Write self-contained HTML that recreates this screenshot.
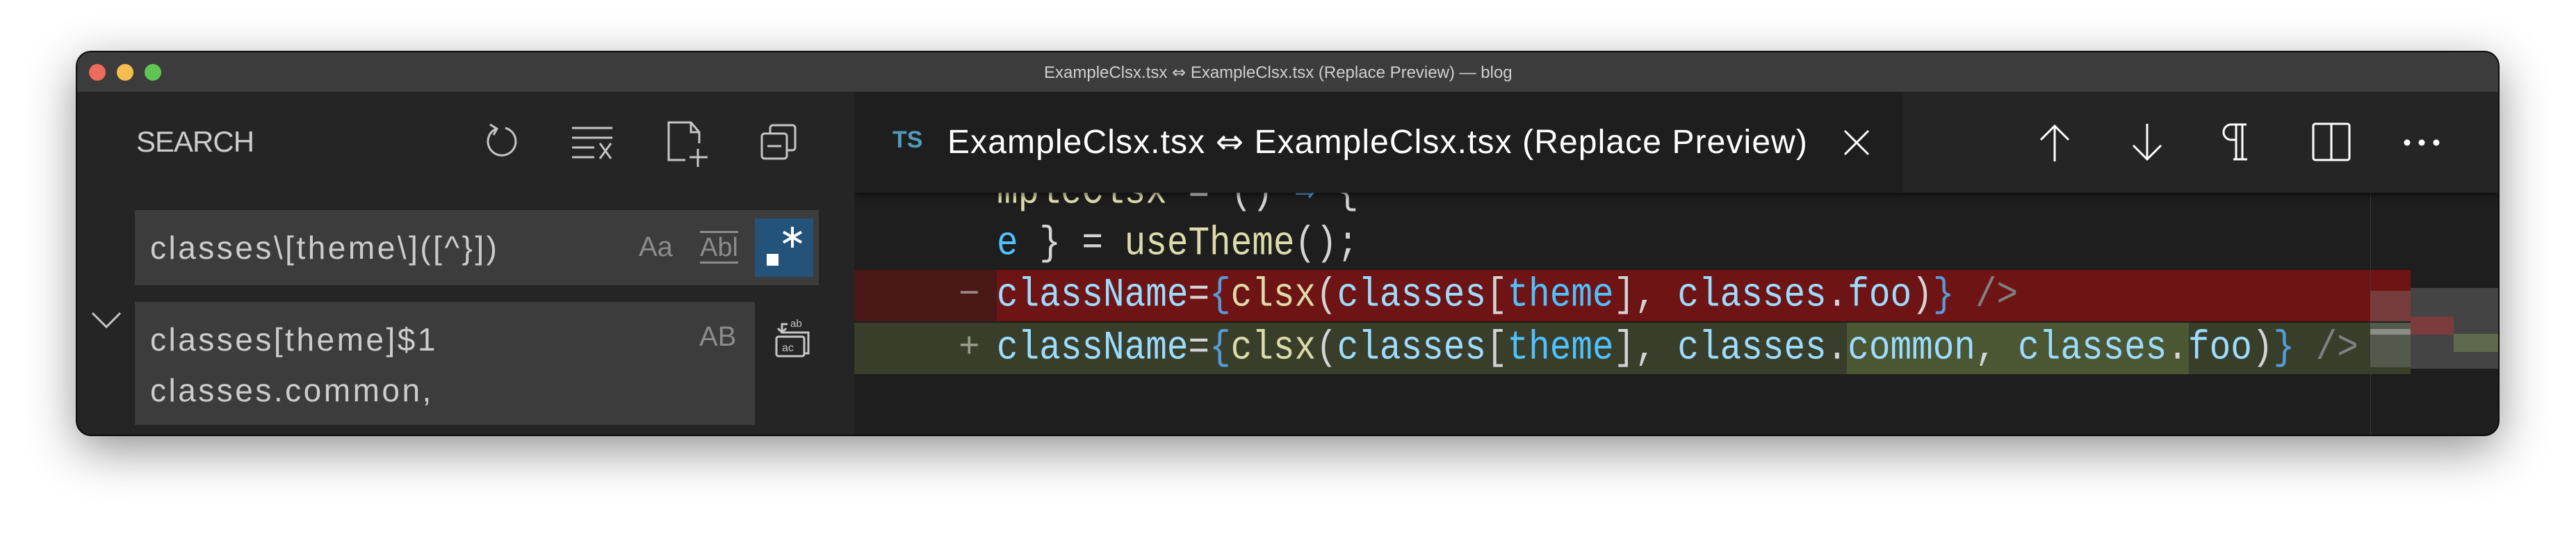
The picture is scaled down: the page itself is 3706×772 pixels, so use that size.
<!DOCTYPE html>
<html><head><meta charset="utf-8"><style>
*{margin:0;padding:0;box-sizing:border-box}
body{width:3706px;height:772px;background:#fff;position:relative;overflow:hidden;font-family:"Liberation Sans",sans-serif}
.win{position:absolute;left:111px;top:75px;width:3483px;height:550px;border-radius:20px;background:#1e1e1e;overflow:hidden;box-shadow:0 20px 70px rgba(0,0,0,.45),0 0 0 2px #111}
.abs{position:absolute}
.title{left:0;top:0;width:100%;height:57px;background:#3c3c3c}
.dot{position:absolute;top:17px;width:24px;height:24px;border-radius:50%}
.side{left:0;top:57px;width:1118px;height:493px;background:#252526}
.mono{font-family:"Liberation Mono","DejaVu Sans Mono",monospace;font-size:51px;white-space:pre}
.ln{position:absolute;left:0;height:74px;width:2239px}
.ln span.t{position:absolute;left:205px;top:2px;line-height:74px;display:inline-block;transform:scaleY(1.15);transform-origin:50% 60%}
.c1{color:#9cdcfe}.c2{color:#dcdcaa}.c3{color:#4fc1ff}.cw{color:#d4d4d4}.cb{color:#569cd6}.cg{color:#808080}
svg{position:absolute}
.in{font-size:46px;letter-spacing:3.5px;color:#cccccc;line-height:73px;white-space:nowrap}
.ar{font-family:"DejaVu Sans",sans-serif}
</style></head><body>
<div class="win">
 <div class="abs title">
  <div class="dot" style="left:17px;background:#ed6a5e"></div>
  <div class="dot" style="left:57px;background:#f5bf4f"></div>
  <div class="dot" style="left:97px;background:#61c554"></div>
  <div class="abs" style="left:1391px;top:15px;font-size:24px;color:#cfcfcf;white-space:nowrap">ExampleClsx.tsx <span class="ar">⇔</span> ExampleClsx.tsx (Replace Preview) — blog</div>
 </div>
 <div class="abs side">
  <div class="abs" style="left:85px;top:48px;font-size:42px;color:#cccccc;letter-spacing:-1px">SEARCH</div>
  <svg style="left:583px;top:44px" width="56" height="56" viewBox="0 0 56 56" fill="none" stroke="#c5c5c5" stroke-width="3"><path d="M20 9 A20 20 0 1 0 33 8"/><path d="M11 3 L21 9 L16 18"/></svg>
  <svg style="left:712px;top:48px" width="64" height="50" viewBox="0 0 64 50" fill="none" stroke="#c5c5c5" stroke-width="3"><path d="M0 4H58M0 18H58M0 32H32M0 46H32M40 26L56 48M56 26L40 48"/></svg>
  <svg style="left:849px;top:42px" width="62" height="66" viewBox="0 0 62 66" fill="none" stroke="#c5c5c5" stroke-width="3"><path d="M26 56H2V2H34L46 16V32M34 2V16H46M44 40V66M32 52H58"/></svg>
  <svg style="left:983px;top:46px" width="52" height="52" viewBox="0 0 52 52" fill="none" stroke="#c5c5c5" stroke-width="3"><rect x="2" y="14" width="36" height="36" rx="4"/><path d="M14 14V6a4 4 0 0 1 4-4h28a4 4 0 0 1 4 4v28a4 4 0 0 1-4 4h-8M10 32H30"/></svg>
  <div class="abs" style="left:83px;top:170px;width:984px;height:108px;background:#3c3c3c"></div>
  <div class="abs in" style="left:105px;top:188px">classes\[theme\]([^}])</div>
  <div class="abs" style="left:808px;top:193px;font-size:40px;line-height:60px;color:#8b8b8b">Aa</div>
  <div class="abs" style="left:896px;top:200px;font-size:38px;color:#8b8b8b;border-top:3px solid #8b8b8b;border-bottom:3px solid #8b8b8b;height:47px;line-height:42px">Abl</div>
  <div class="abs" style="left:975px;top:182px;width:84px;height:84px;background:#235379"></div>
  <div class="abs" style="left:992px;top:233px;width:17px;height:17px;background:#fff"></div>
  <svg style="left:1012px;top:192px" width="34" height="34" viewBox="0 0 34 34" stroke="#fff" stroke-width="4"><path d="M17 2V32M4 9.5L30 24.5M30 9.5L4 24.5"/></svg>
  <svg style="left:20px;top:316px" width="44" height="24" viewBox="0 0 44 24" fill="none" stroke="#c5c5c5" stroke-width="3"><path d="M2 2L22 22L42 2"/></svg>
  <div class="abs" style="left:83px;top:302px;width:892px;height:177px;background:#3c3c3c"></div>
  <div class="abs in" style="left:105px;top:320px">classes[theme]$1<br>classes.common,</div>
  <div class="abs" style="left:895px;top:322px;font-size:40px;line-height:60px;color:#8b8b8b">AB</div>
  <svg style="left:1002px;top:324px" width="56" height="60" viewBox="0 0 56 60" fill="none" stroke="#c5c5c5" stroke-width="3"><path d="M20 10H12V22M6 16L12 22L18 16"/><rect x="4" y="28" width="40" height="28" rx="3"/><path d="M12 22H50V52H44"/><text x="24" y="14" font-size="15" fill="#c5c5c5" stroke="none" font-family="Liberation Sans">ab</text><text x="12" y="49" font-size="16" fill="#c5c5c5" stroke="none" font-family="Liberation Sans">ac</text></svg>
 </div>
 <div class="abs" style="left:1118px;top:57px;width:2365px;height:493px;background:#1e1e1e;overflow:hidden">
  <div class="mono">
   <div class="ln" style="top:108px"><span class="t"><span class="c2">mpleClsx</span><span class="cw"> = () </span><span class="cb">⇒</span><span class="cw"> {</span></span></div>
   <div class="ln" style="top:182px"><span class="t"><span class="c3">e</span><span class="cw"> } = </span><span class="c2">useTheme</span><span class="cw">();</span></span></div>
   <div class="ln" style="top:256px;background:#6f1414"><div class="abs" style="left:0;top:0;width:205px;height:74px;background:#4b1818"></div><span class="abs" style="left:150px;line-height:74px;color:#9a8a8a">−</span><span class="t"><span class="c1">className</span><span class="cw">=</span><span class="cb">{</span><span class="c2">clsx</span><span class="cw">(</span><span class="c1">classes</span><span class="cw">[</span><span class="c3">theme</span><span class="cw">], </span><span class="c1">classes</span><span class="cw">.</span><span class="c1">foo</span><span class="cw">)</span><span class="cb">}</span><span class="cg"> /&gt;</span></span></div>
   <div class="ln" style="top:332px;background:#393e2b"><div class="abs" style="left:1428px;top:0;width:492px;height:74px;background:#4b5633"></div><span class="abs" style="left:150px;line-height:74px;color:#9a9a8a">+</span><span class="t"><span class="c1">className</span><span class="cw">=</span><span class="cb">{</span><span class="c2">clsx</span><span class="cw">(</span><span class="c1">classes</span><span class="cw">[</span><span class="c3">theme</span><span class="cw">], </span><span class="c1">classes</span><span class="cw">.</span><span class="c1">common</span><span class="cw">, </span><span class="c1">classes</span><span class="cw">.</span><span class="c1">foo</span><span class="cw">)</span><span class="cb">}</span><span class="cg"> /&gt;</span></span></div>
  </div>
  <div class="abs" style="left:2181px;top:145px;width:1px;height:348px;background:#3a3a3a"></div>
  <div class="abs" style="left:2181px;top:286px;width:58px;height:44px;background:#773c3c"></div>
  <div class="abs" style="left:2181px;top:332px;width:58px;height:64px;background:#545a4b"></div>
  <div class="abs" style="left:2181px;top:341px;width:58px;height:8px;background:#8a8e86"></div>
  <div class="abs" style="left:2239px;top:282px;width:126px;height:116px;background:#444"></div>
  <div class="abs" style="left:2239px;top:323px;width:62px;height:26px;background:#7a3c3c"></div>
  <div class="abs" style="left:2301px;top:348px;width:64px;height:26px;background:#5f6a4c"></div>
  <div class="abs" style="left:0;top:0;width:2365px;height:145px;background:#252526;box-shadow:0 4px 8px rgba(0,0,0,.5)"></div>
  <div class="abs" style="left:0;top:0;width:1508px;height:145px;background:#1e1e1e"></div>
  <div class="abs" style="left:55px;top:50px;font-size:34px;font-weight:bold;color:#519aba">TS</div>
  <div class="abs" style="left:134px;top:44px;font-size:48px;color:#ffffff;white-space:nowrap;letter-spacing:1.1px">ExampleClsx.tsx <span class="ar">⇔</span> ExampleClsx.tsx (Replace Preview)</div>
  <svg style="left:1423px;top:54px" width="38" height="38" viewBox="0 0 38 38" stroke="#fff" stroke-width="3"><path d="M2 2L36 36M36 2L2 36"/></svg>
  <svg style="left:1704px;top:46px" width="46" height="54" viewBox="0 0 46 54" fill="none" stroke="#fff" stroke-width="3"><path d="M23 54V3M3 23L23 3L43 23"/></svg>
  <svg style="left:1837px;top:46px" width="46" height="54" viewBox="0 0 46 54" fill="none" stroke="#fff" stroke-width="3"><path d="M23 0V51M3 31L23 51L43 31"/></svg>
  <svg style="left:1967px;top:44px" width="40" height="56" viewBox="0 0 40 56" fill="none" stroke="#fff" stroke-width="3"><path d="M36 3H14a11 11 0 0 0 0 22h7M21 3V53M30 3V53M17 53H37"/></svg>
  <svg style="left:2097px;top:44px" width="56" height="56" viewBox="0 0 56 56" fill="none" stroke="#fff" stroke-width="3"><rect x="2" y="2" width="52" height="52" rx="3"/><path d="M28 2V54"/></svg>
  <svg style="left:2227px;top:66px" width="56" height="14" viewBox="0 0 56 14" fill="#fff"><circle cx="7" cy="7" r="4.5"/><circle cx="28" cy="7" r="4.5"/><circle cx="49" cy="7" r="4.5"/></svg>
 </div>
</div>
</body></html>
